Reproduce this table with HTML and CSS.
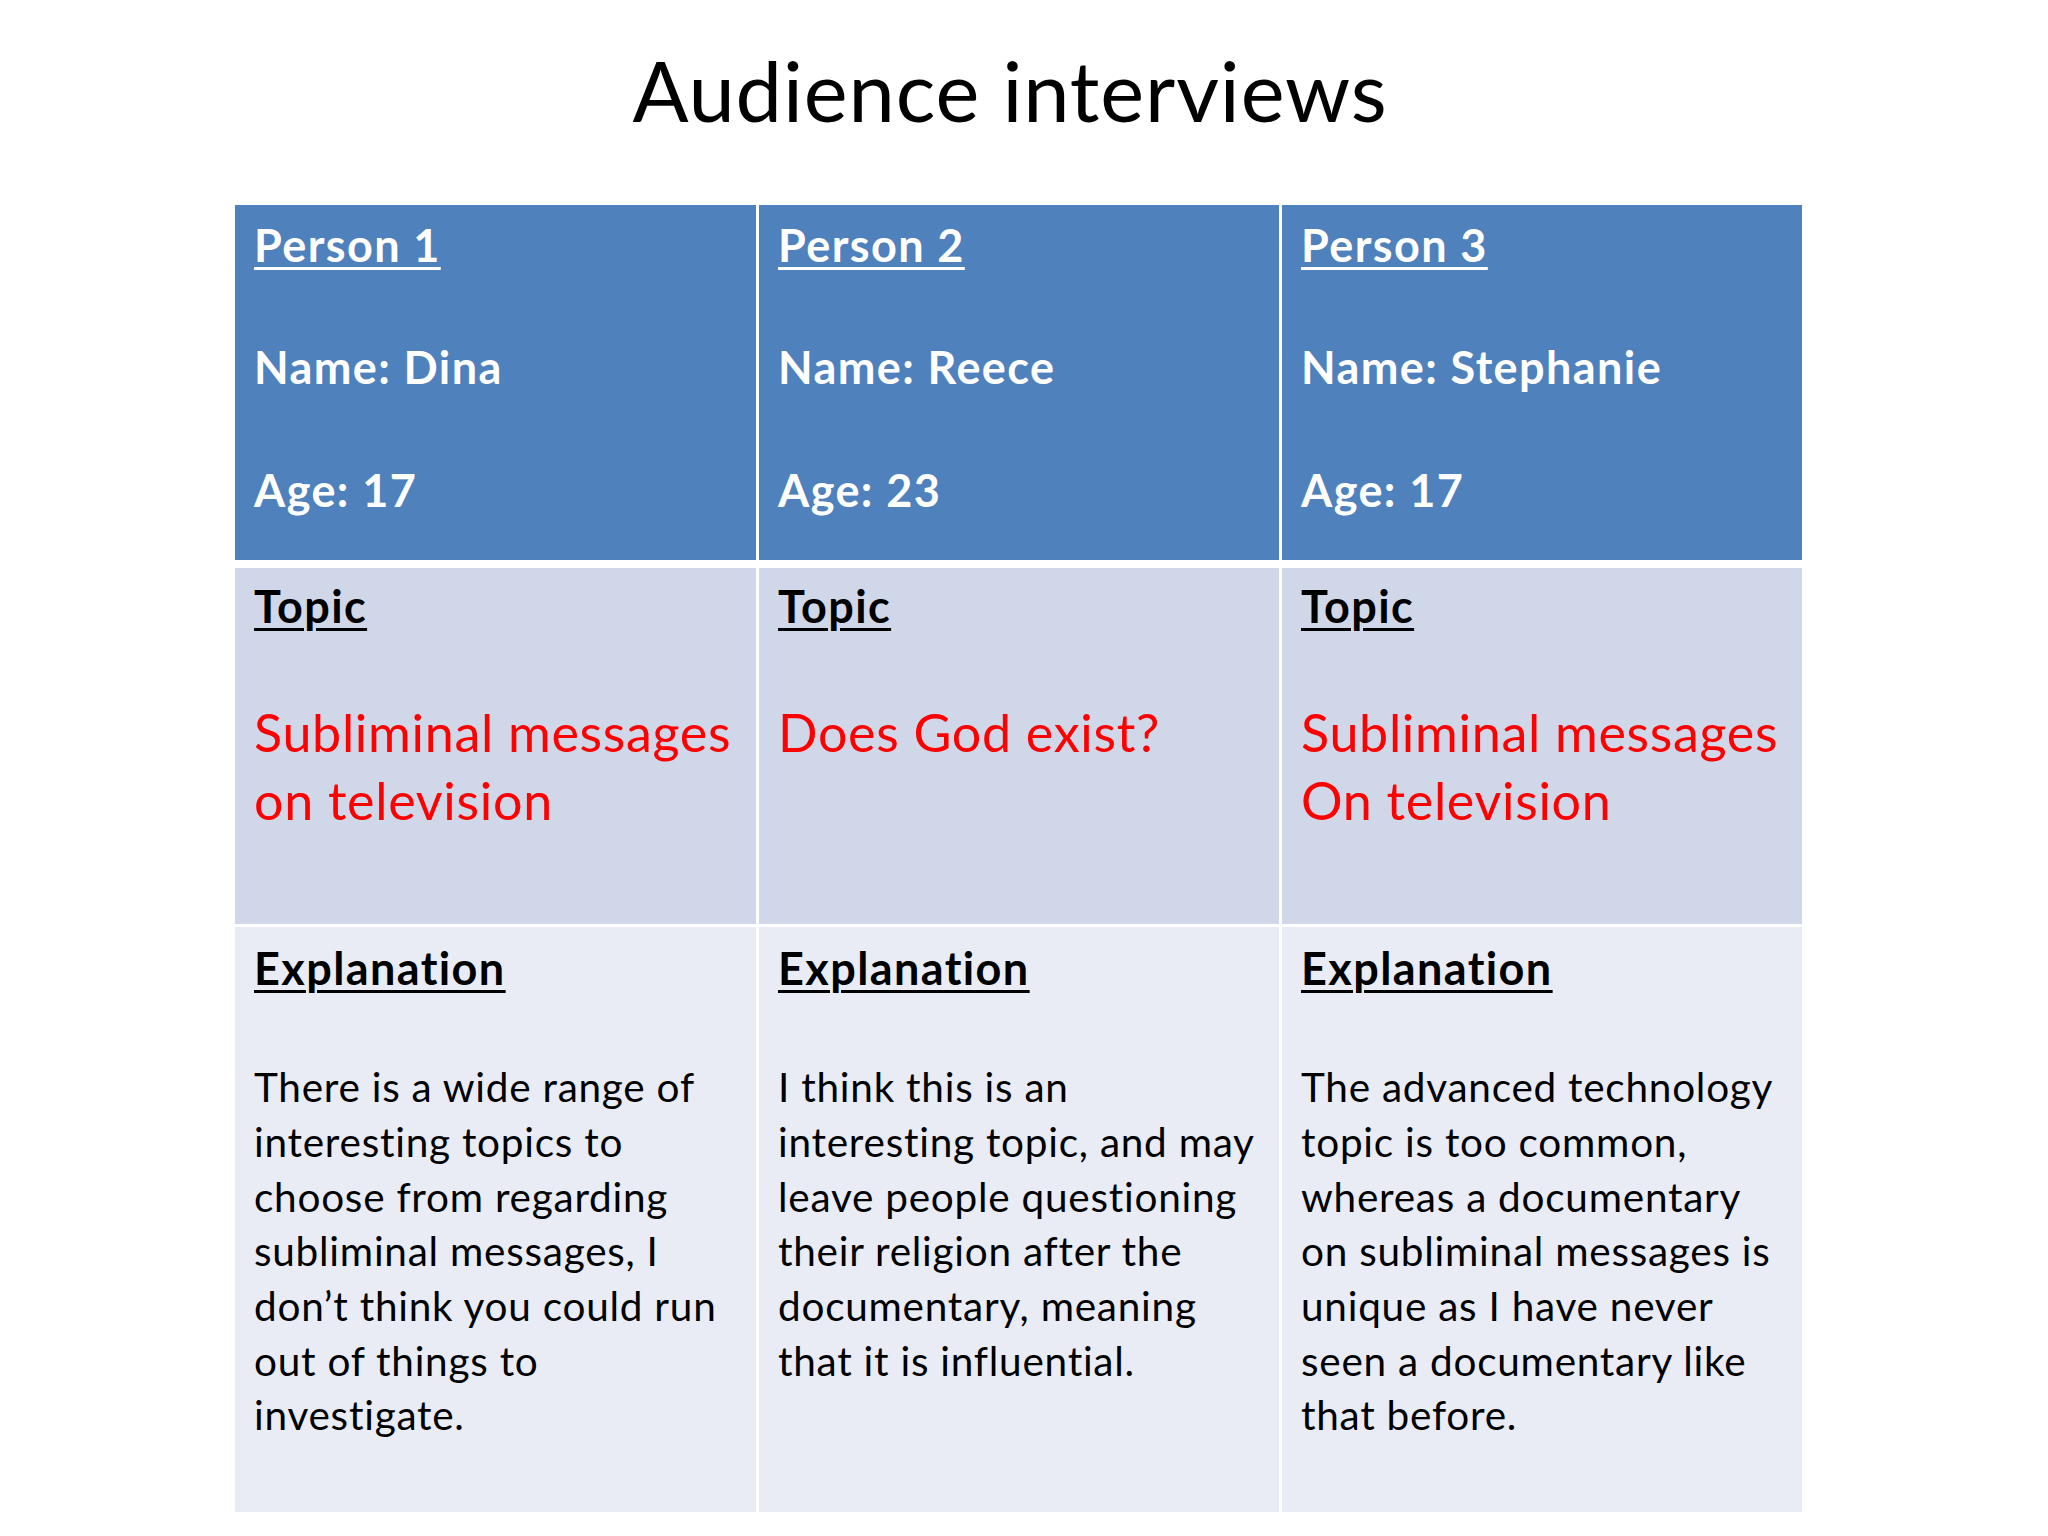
FILE: index.html
```html
<!DOCTYPE html>
<html lang="en">
<head>
<meta charset="utf-8">
<title>Audience interviews</title>
<link rel="stylesheet" href="styles.css">
</head>
<body>
<div class="slide">
  <h1 class="title">Audience interviews</h1>
  <div class="table">
    <div class="cell head">
      <p class="hl"><span class="ul">Person 1</span></p>
      <p class="hl">Name: Dina</p>
      <p class="hl">Age: 17</p>
    </div>
    <div class="cell head">
      <p class="hl"><span class="ul">Person 2</span></p>
      <p class="hl">Name: Reece</p>
      <p class="hl">Age: 23</p>
    </div>
    <div class="cell head">
      <p class="hl"><span class="ul">Person 3</span></p>
      <p class="hl">Name: Stephanie</p>
      <p class="hl">Age: 17</p>
    </div>

    <div class="cell topic">
      <p class="label"><span class="ul">Topic</span></p>
      <p class="red">Subliminal messages<br>on television</p>
    </div>
    <div class="cell topic">
      <p class="label"><span class="ul">Topic</span></p>
      <p class="red">Does God exist?</p>
    </div>
    <div class="cell topic">
      <p class="label"><span class="ul">Topic</span></p>
      <p class="red">Subliminal messages<br>On television</p>
    </div>

    <div class="cell expl">
      <p class="label"><span class="ul">Explanation</span></p>
      <p class="body">There is a wide range of<br>interesting topics to<br>choose from regarding<br>subliminal messages, I<br>don’t think you could run<br>out of things to<br>investigate.</p>
    </div>
    <div class="cell expl">
      <p class="label"><span class="ul">Explanation</span></p>
      <p class="body">I think this is an<br>interesting topic, and may<br>leave people questioning<br>their religion after the<br>documentary, meaning<br>that it is influential.</p>
    </div>
    <div class="cell expl">
      <p class="label"><span class="ul">Explanation</span></p>
      <p class="body">The advanced technology<br>topic is too common,<br>whereas a documentary<br>on subliminal messages is<br>unique as I have never<br>seen a documentary like<br>that before.</p>
    </div>
  </div>
</div>
</body>
</html>
```
FILE: styles.css
```css
html, body {
  margin: 0;
  padding: 0;
  background: #ffffff;
}

.slide {
  width: 2048px;
  height: 1536px;
  font-family: Lato, "Open Sans", sans-serif;
  color: #000;
}

.title {
  margin: 40px 28px 0 0;
  height: 100px;
  font-size: 83px;
  line-height: 100px;
  font-weight: 400;
  letter-spacing: 0.9px;
  text-align: center;
}

.table {
  margin: 65px 0 0 235px;
  width: 1567px;
  display: grid;
  grid-template-columns: 521px 523px 523px;
}

.cell {
  box-sizing: border-box;
  padding-left: 19px;
}

.cell:nth-child(3n+2),
.cell:nth-child(3n) {
  border-left: 3px solid #fff;
}

.cell p {
  margin: 0;
  white-space: nowrap;
}

.head {
  height: 355px;
  background: #4f81bd;
  color: #fff;
  padding-top: 10px;
}

.topic {
  height: 364px;
  border-top: 8px solid #fff;
  background: #d0d7e8;
  padding-top: 8px;
}

.expl {
  height: 588px;
  border-top: 3px solid #fff;
  background: #e9ecf4;
  padding-top: 11px;
}

.hl,
.label {
  font-size: 45px;
  line-height: 61.2px;
  font-weight: 700;
  letter-spacing: 1.4px;
}

.hl + .hl {
  margin-top: 61.2px;
}

.ul {
  text-decoration: underline;
  text-decoration-thickness: 3px;
  text-underline-offset: 5px;
}

.red {
  margin-top: 62px !important;
  color: #ff0000;
  font-size: 52px;
  line-height: 67.6px;
  letter-spacing: 0.7px;
}

.body {
  margin-top: 61px !important;
  font-size: 40.5px;
  line-height: 54.7px;
  letter-spacing: 0.75px;
}
```
